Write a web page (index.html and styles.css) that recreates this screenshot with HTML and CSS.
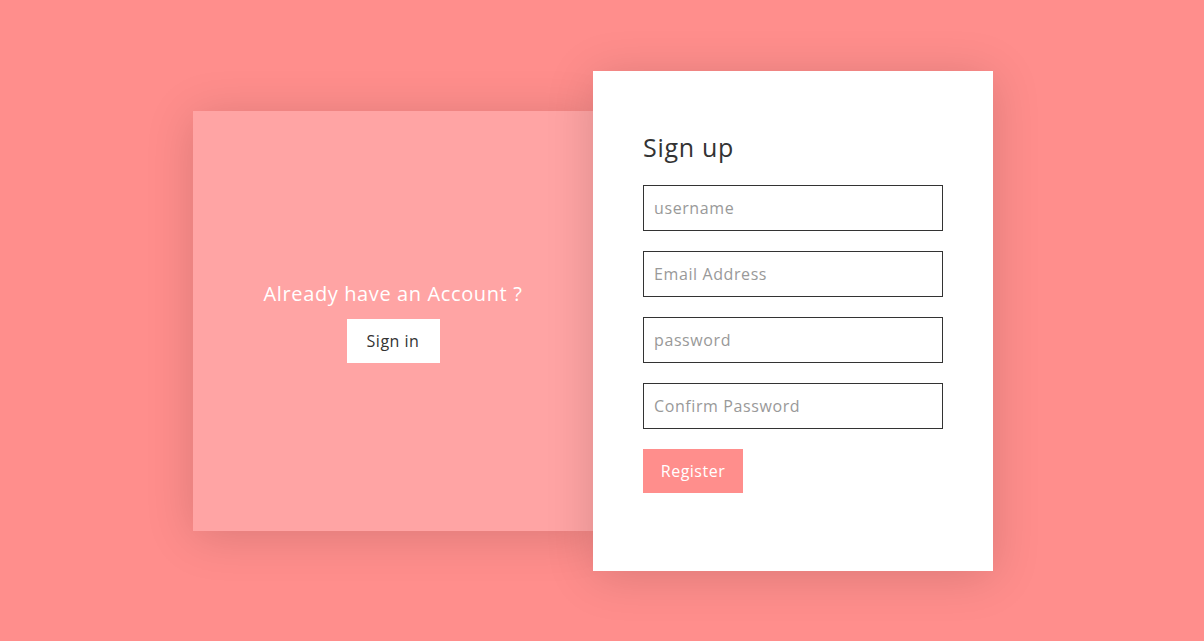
FILE: index.html
```html
<!DOCTYPE html>
<html lang="en">
<head>
<meta charset="utf-8">
<title>Sign up</title>
<link rel="stylesheet" href="styles.css">
</head>
<body>
<main class="page">
  <div class="panels">
    <section class="side">
      <p class="side-text">Already have an Account ?</p>
      <button class="btn btn-light" type="button">Sign in</button>
    </section>
    <section class="form-card">
      <h2 class="form-title">Sign up</h2>
      <form class="form">
        <input class="field" type="text" placeholder="username">
        <input class="field" type="email" placeholder="Email Address">
        <input class="field" type="password" placeholder="password">
        <input class="field" type="password" placeholder="Confirm Password">
        <button class="btn btn-primary" type="button">Register</button>
      </form>
    </section>
  </div>
</main>
</body>
</html>
```
FILE: styles.css
```css
* { box-sizing: border-box; }
html, body { margin: 0; padding: 0; }
body {
  background: #ff8e8c;
  font-family: "Open Sans", "Liberation Sans", sans-serif;
  color: #333;
}
.page {
  min-height: 100vh;
  display: flex;
  align-items: center;
  justify-content: center;
  padding-right: 18px;
}
.panels {
  display: flex;
  align-items: center;
}
.side {
  position: relative;
  z-index: 1;
  width: 400px;
  height: 420px;
  background: #ffa4a4;
  box-shadow: 0 5px 45px rgba(0, 0, 0, 0.15);
  display: flex;
  flex-direction: column;
  align-items: center;
  justify-content: center;
}
.side-text {
  margin: 0 0 10px;
  color: #fff;
  font-size: 20px;
  line-height: 30px;
  font-weight: 500;
  letter-spacing: 0.62px;
}
.form-card {
  position: relative;
  z-index: 2;
  width: 400px;
  height: 500px;
  background: #fff;
  padding: 50px;
  box-shadow: 0 5px 45px rgba(0, 0, 0, 0.15);
}
.form-title {
  margin: 8px 0 20px;
  font-size: 25px;
  line-height: 36px;
  font-weight: 500;
  color: #333;
  letter-spacing: 0.7px;
}
.form {
  display: flex;
  flex-direction: column;
  align-items: flex-start;
  gap: 20px;
}
.field {
  width: 300px;
  height: 46px;
  border: 1px solid #333;
  padding: 0 10px;
  font-family: inherit;
  font-size: 16px;
  color: #333;
  outline: none;
  letter-spacing: 0.6px;
}
.field::placeholder { color: #999; }
.btn {
  height: 44px;
  border: none;
  font-family: inherit;
  font-size: 16px;
  cursor: pointer;
  letter-spacing: 0.5px;
  padding: 0;
}
.btn-light {
  width: 93px;
  background: #fff;
  color: #333;
  font-weight: 500;
}
.btn-primary {
  width: 100px;
  background: #ff8e8c;
  color: #fff;
}
```
